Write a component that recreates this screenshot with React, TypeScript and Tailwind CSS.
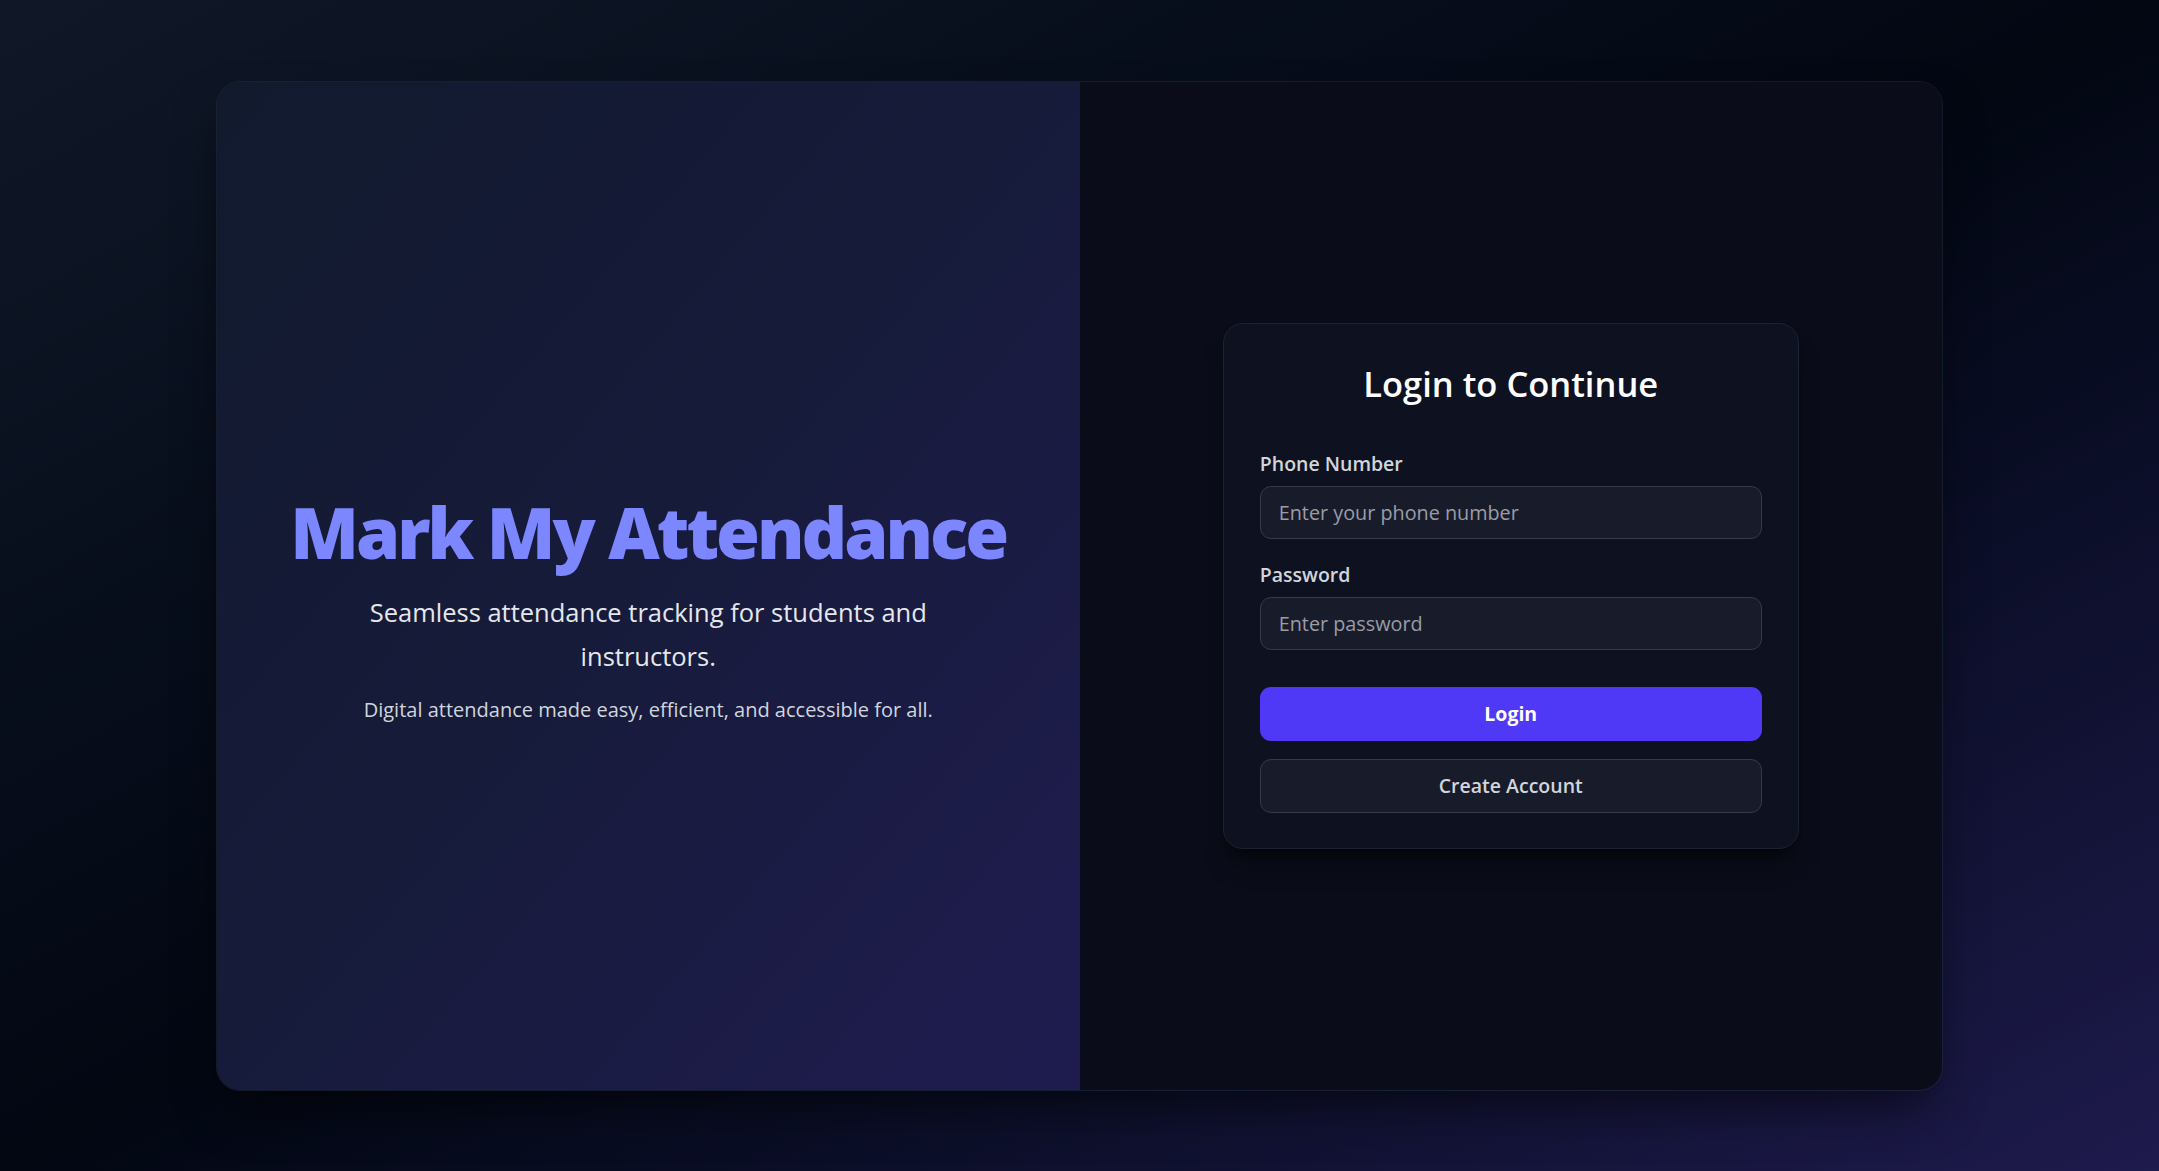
import React from "react";

const body = { fontFamily: '"Open Sans", "Noto Sans", sans-serif' };

function Field({ label, placeholder, type = "text" }: { label: string; placeholder: string; type?: string }) {
  return (
    <div className="flex flex-col">
      <label className="mb-2 text-[19.5px] leading-[28px] font-semibold text-gray-300">{label}</label>
      <input
        type={type}
        placeholder={placeholder}
        className="h-[53px] w-full rounded-[11px] border border-[#343a4a] bg-[#181c2a] px-[18px] text-[19.8px] text-gray-200 placeholder:text-[#9a9ca6] outline-none"
      />
    </div>
  );
}

export default function App() {
  return (
    <div
      className="flex h-screen w-full items-center justify-center bg-gradient-to-br from-gray-900 via-gray-950 to-indigo-950"
      style={body}
    >
      <div className="grid h-[1010px] w-[1727px] grid-cols-2 overflow-hidden rounded-[24px] border border-gray-800/60 shadow-2xl shadow-black/60">
        {/* left: branding */}
        <div className="flex flex-col items-center justify-center bg-gradient-to-br from-[#111a2d] via-[#171b3b] to-[#1f1b50] pt-[50px] text-center">
          <h1 className="text-[71px] leading-[72px] font-extrabold tracking-[-3px] text-indigo-400">
            Mark My Attendance
          </h1>
          <p className="mt-[22px] max-w-[600px] text-[25.5px] leading-[44px] text-gray-200">
            Seamless attendance tracking for students and instructors.
          </p>
          <p className="mt-[17px] text-[20px] leading-[30px] text-gray-300">
            Digital attendance made easy, efficient, and accessible for all.
          </p>
        </div>

        {/* right: login form */}
        <div className="flex items-center justify-center bg-[#0a0d19]">
          <div className="w-[576px] rounded-[20px] border border-[#1c2232] bg-[#0e1220] px-[36px] pt-[38px] pb-[35px] shadow-xl shadow-black/40">
            <h2 className="mb-[44px] text-center text-[34.5px] leading-[44px] font-semibold text-white">Login to Continue</h2>
            <div className="flex flex-col gap-[22px]">
              <Field label="Phone Number" placeholder="Enter your phone number" />
              <Field label="Password" placeholder="Enter password" type="password" />
            </div>
            <button className="mt-[37px] h-[54px] w-full rounded-[11px] bg-indigo-600 text-[19.5px] font-bold text-white">
              Login
            </button>
            <button className="mt-[18px] h-[54px] w-full rounded-[11px] border border-[#343a4a] bg-[#181c2a] text-[19.5px] font-semibold text-gray-300">
              Create Account
            </button>
          </div>
        </div>
      </div>
    </div>
  );
}
